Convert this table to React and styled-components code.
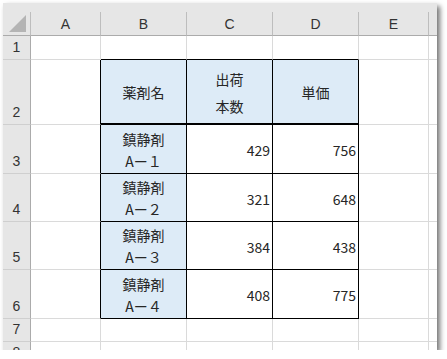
import styled, { createGlobalStyle } from "styled-components";

const GlobalStyle = createGlobalStyle`
  body {
    margin: 0;
    background: #ffffff;
    font-family: "Noto Sans CJK JP", "Noto Sans", sans-serif;
  }
`;

const GRID = "#dadada";
const HEAD_LINE = "#bdbdbd";
const INK = "#000000";

const Frame = styled.div`
  margin: 3px 0 0 3px;
  width: 434px;
  height: 347px;
  overflow: hidden;
  background: #fff;
  box-shadow: 3px 3px 5px rgba(0, 0, 0, 0.55);
`;

const TopStrip = styled.div`
  height: 9px;
  background: #e6e6e6;
`;

const Sheet = styled.div`
  display: grid;
  grid-template-columns: 28px 70px 86px 86px 86px 70px 70px;
  grid-template-rows: 24px 24px 65px 49px 48px 48px 49px 23px 23px;
  color: #262626;
  font-size: 14px;
`;

const Cell = styled.div`
  box-sizing: border-box;
  border-right: 1px solid ${(p) => p.$r || GRID};
  border-bottom: ${(p) => p.$bw || 1}px solid ${(p) => p.$b || GRID};
  background: ${(p) => p.$bg || "#fff"};
  overflow: hidden;
  white-space: nowrap;
`;

const Corner = styled(Cell)`
  background: #e6e6e6;
  display: flex;
  align-items: flex-end;
  justify-content: flex-end;
  padding: 0 4px 3px 0;
  svg {
    display: block;
  }
`;

const ColHead = styled(Cell)`
  background: #e6e6e6;
  display: flex;
  align-items: center;
  justify-content: center;
  font-family: "Liberation Sans", Arial, sans-serif;
  font-size: 14px;
  color: #333;
`;

const RowHead = styled(Cell)`
  background: #e6e6e6;
  display: flex;
  align-items: flex-end;
  justify-content: center;
  line-height: 23px;
  font-family: "Liberation Sans", Arial, sans-serif;
  color: #333;
`;

const HeadCell = styled(Cell)`
  background: #ddebf7;
  display: flex;
  flex-direction: column;
  align-items: center;
  justify-content: center;
  line-height: 27px;
  padding-top: 2px;
`;

const NameCell = styled(Cell)`
  background: #ddebf7;
  display: flex;
  flex-direction: column;
  align-items: center;
  justify-content: flex-end;
  line-height: 22px;
  padding-bottom: 1px;
`;

const NumCell = styled(Cell)`
  display: flex;
  align-items: center;
  justify-content: flex-end;
  padding: 2px 2px 0 0;
`;

// the sixth column lies mostly outside the window, so its letter is not shown
const columns = ["A", "B", "C", "D", "E", ""];

const rows = [
  { n: 3, label: "Aー１", qty: 429, price: 756 },
  { n: 4, label: "Aー２", qty: 321, price: 648 },
  { n: 5, label: "Aー３", qty: 384, price: 438 },
  { n: 6, label: "Aー４", qty: 408, price: 775 },
];

const App = () => {
  return (
    <>
      <GlobalStyle />
      <Frame>
        <TopStrip />
        <Sheet>
          {/* column headers */}
          <Corner $r={HEAD_LINE} $b="#ababab">
            <svg width="17" height="17" viewBox="0 0 17 17">
              <polygon points="17,0 17,17 0,17" fill="#b4b4b4" />
            </svg>
          </Corner>
          {columns.map((c, i) => (
            <ColHead key={i} $r={HEAD_LINE} $b="#ababab">
              {c}
            </ColHead>
          ))}

          {/* row 1 */}
          <RowHead $r="#ababab" $b="#cfcfcf">1</RowHead>
          <Cell />
          <Cell $b={INK} />
          <Cell $b={INK} />
          <Cell $b={INK} />
          <Cell />
          <Cell />

          {/* row 2: table header */}
          <RowHead $r="#ababab" $b="#cfcfcf">2</RowHead>
          <Cell $r={INK} />
          <HeadCell $r={INK} $b={INK} $bw={2}>
            <span>薬剤名</span>
          </HeadCell>
          <HeadCell $r={INK} $b={INK} $bw={2}>
            <span>出荷</span>
            <span>本数</span>
          </HeadCell>
          <HeadCell $r={INK} $b={INK} $bw={2}>
            <span>単価</span>
          </HeadCell>
          <Cell />
          <Cell />

          {/* data rows */}
          {rows.map((r) => (
            <Row key={r.n} {...r} />
          ))}

          {/* rows 7, 8 */}
          {[7, 8].map((n) => (
            <RowCells key={n} n={n} />
          ))}
        </Sheet>
      </Frame>
    </>
  );
};

const Row = ({ n, label, qty, price }) => (
  <>
    <RowHead $r="#ababab" $b="#cfcfcf">
      {n}
    </RowHead>
    <Cell $r={INK} />
    <NameCell $r={INK} $b={INK}>
      <span>鎮静剤</span>
      <span>{label}</span>
    </NameCell>
    <NumCell $r={INK} $b={INK}>
      {qty}
    </NumCell>
    <NumCell $r={INK} $b={INK}>
      {price}
    </NumCell>
    <Cell />
    <Cell />
  </>
);

const RowCells = ({ n }) => (
  <>
    <RowHead $r="#ababab" $b="#cfcfcf">
      {n}
    </RowHead>
    <Cell />
    <Cell />
    <Cell />
    <Cell />
    <Cell />
    <Cell />
  </>
);

export default App;
